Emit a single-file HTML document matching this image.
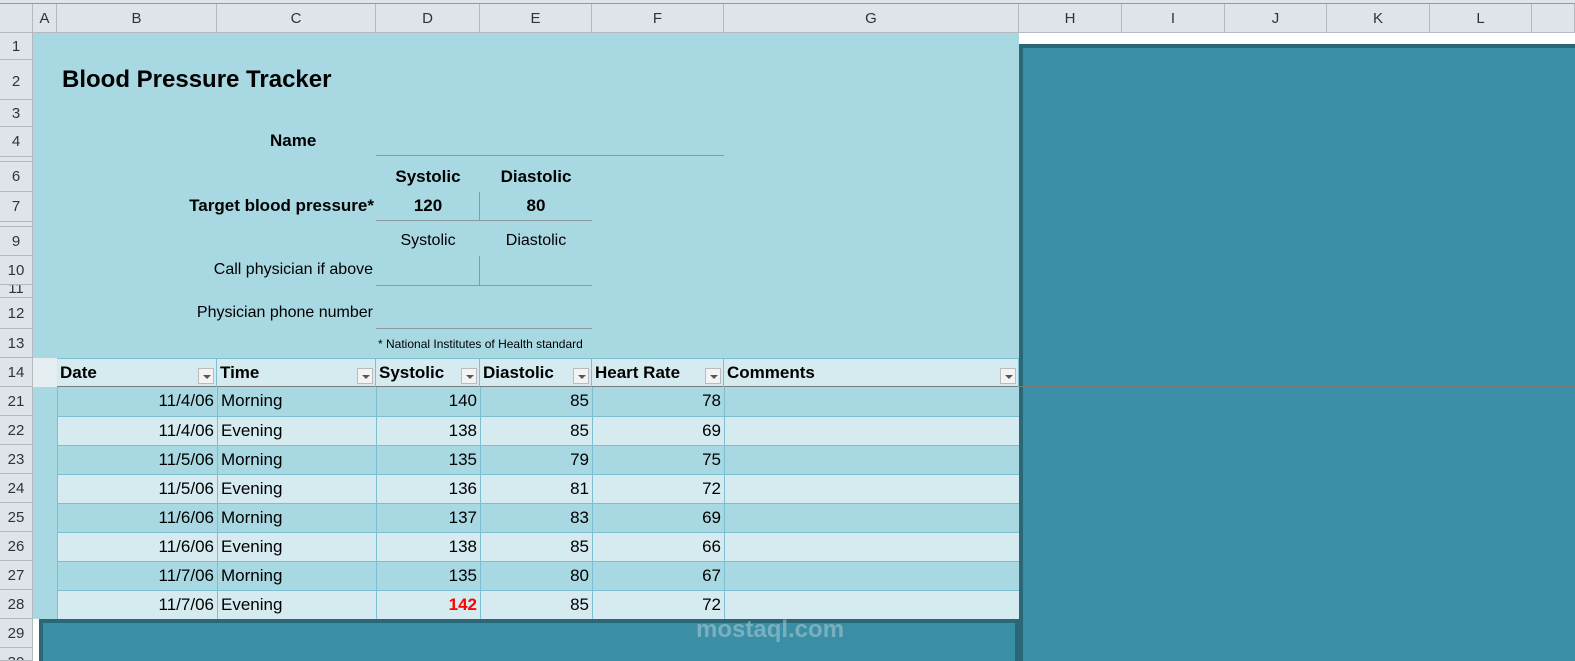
<!DOCTYPE html>
<html style="width:1575px;height:661px;overflow:hidden"><head><meta charset="utf-8"><style>
*{margin:0;padding:0;box-sizing:border-box}
body{width:1575px;height:661px;overflow:hidden;background:#fff;font-family:"Liberation Sans",sans-serif;position:relative}
div{position:absolute}
.ch{top:4px;height:29px;background:#dfe3ea;border-right:1px solid #b4b8bf;border-bottom:1px solid #b4b8bf;font-size:15px;color:#333;text-align:center;line-height:29px}
.rh{left:0;width:33px;background:#dfe3ea;border-bottom:1px solid #b4b8bf;border-right:1px solid #b4b8bf;font-size:15px;color:#333;text-align:center;overflow:hidden}
.t{font-size:17px;color:#000;white-space:nowrap}
.b{font-weight:bold}
.c{height:29px;line-height:29px;font-size:17px;border-right:1px solid #7cbfd0;padding:0 3px;white-space:nowrap}
.hd{font-weight:bold}
.dd{position:absolute;right:2px;top:10px;width:16px;height:16px;background:#f3f3f3;border:1px solid #bbb}
.dd:after{content:"";position:absolute;left:4px;top:6px;border-left:4px solid transparent;border-right:4px solid transparent;border-top:4px solid #555}
.ln{height:1px;background:#8c9a9e}
td{height:29px;padding:0 3px;border-right:1px solid #7cbfd0;border-bottom:1px solid #7cbfd0;text-align:right;white-space:nowrap;line-height:28px}
td:nth-child(2){text-align:left}
td:first-child{border-left:1px solid #7cbfd0}
</style></head><body>
<div style="left:0;top:0;width:1575px;height:4px;background:#dfe3ea;border-bottom:1px solid #999"></div>
<div class="ch" style="left:0;width:33px"></div>
<div class="ch" style="left:33px;width:24px">A</div>
<div class="ch" style="left:57px;width:160px">B</div>
<div class="ch" style="left:217px;width:159px">C</div>
<div class="ch" style="left:376px;width:104px">D</div>
<div class="ch" style="left:480px;width:112px">E</div>
<div class="ch" style="left:592px;width:132px">F</div>
<div class="ch" style="left:724px;width:295px">G</div>
<div class="ch" style="left:1019px;width:103px">H</div>
<div class="ch" style="left:1122px;width:103px">I</div>
<div class="ch" style="left:1225px;width:102px">J</div>
<div class="ch" style="left:1327px;width:103px">K</div>
<div class="ch" style="left:1430px;width:102px">L</div>
<div class="ch" style="left:1532px;width:43px"></div>

<div class="rh" style="top:33px;height:27px;line-height:27px">1</div>
<div class="rh" style="top:60px;height:40px;line-height:44px">2</div>
<div class="rh" style="top:100px;height:27px;line-height:27px">3</div>
<div class="rh" style="top:127px;height:30px;line-height:30px">4</div>
<div class="rh" style="top:157px;height:5px"></div>
<div class="rh" style="top:162px;height:30px;line-height:30px">6</div>
<div class="rh" style="top:192px;height:30px;line-height:30px">7</div>
<div class="rh" style="top:222px;height:5px"></div>
<div class="rh" style="top:227px;height:29px;line-height:29px">9</div>
<div class="rh" style="top:256px;height:29px;line-height:29px">10</div>
<div class="rh" style="top:285px;height:13px;line-height:8px">11</div>
<div class="rh" style="top:298px;height:31px;line-height:31px">12</div>
<div class="rh" style="top:329px;height:29px;line-height:29px">13</div>
<div class="rh" style="top:358px;height:29px;line-height:29px">14</div>
<div class="rh" style="top:387px;height:29px;line-height:29px">21</div>
<div class="rh" style="top:416px;height:29px;line-height:29px">22</div>
<div class="rh" style="top:445px;height:29px;line-height:29px">23</div>
<div class="rh" style="top:474px;height:29px;line-height:29px">24</div>
<div class="rh" style="top:503px;height:29px;line-height:29px">25</div>
<div class="rh" style="top:532px;height:29px;line-height:29px">26</div>
<div class="rh" style="top:561px;height:29px;line-height:29px">27</div>
<div class="rh" style="top:590px;height:29px;line-height:29px">28</div>
<div class="rh" style="top:619px;height:29px;line-height:29px">29</div>
<div class="rh" style="top:648px;height:13px;line-height:29px">30</div>

<div style="left:33px;top:33px;width:986px;height:586px;background:#a8d8e2"></div>
<div style="left:33px;top:358px;width:24px;height:29px;background:#e4eef1"></div>

<div class="t b" style="left:62px;top:66px;font-size:24px">Blood Pressure Tracker</div>
<div class="t b" style="left:270px;top:131px">Name</div>
<div class="ln" style="left:376px;top:155px;width:348px"></div>
<div class="t b" style="left:376px;top:167px;width:104px;text-align:center">Systolic</div>
<div class="t b" style="left:480px;top:167px;width:112px;text-align:center">Diastolic</div>
<div class="t b" style="left:57px;top:196px;width:317px;text-align:right">Target blood pressure*</div>
<div class="t b" style="left:376px;top:196px;width:104px;text-align:center">120</div>
<div class="t b" style="left:480px;top:196px;width:112px;text-align:center">80</div>
<div style="left:479px;top:192px;width:1px;height:29px;background:#8c9a9e"></div>
<div class="ln" style="left:376px;top:220px;width:216px"></div>
<div class="t" style="left:376px;top:232px;width:104px;text-align:center;font-size:16px">Systolic</div>
<div class="t" style="left:480px;top:232px;width:112px;text-align:center;font-size:16px">Diastolic</div>
<div class="t" style="left:57px;top:261px;width:316px;text-align:right;font-size:16px">Call physician if above</div>
<div style="left:479px;top:256px;width:1px;height:29px;background:#8c9a9e"></div>
<div class="ln" style="left:376px;top:285px;width:216px"></div>
<div class="t" style="left:57px;top:304px;width:316px;text-align:right;font-size:16px">Physician phone number</div>
<div class="ln" style="left:376px;top:328px;width:216px"></div>
<div class="t" style="left:378px;top:337px;font-size:12px">* National Institutes of Health standard</div>

<div style="left:57px;top:358px;width:962px;height:29px;background:#d6ebf0;border-top:1px solid #7cbfd0;border-bottom:1px solid #7a7a7a"></div>
<div class="c hd" style="left:57px;top:358px;width:160px">Date<span class="dd"></span></div>
<div class="c hd" style="left:217px;top:358px;width:159px">Time<span class="dd"></span></div>
<div class="c hd" style="left:376px;top:358px;width:104px">Systolic<span class="dd"></span></div>
<div class="c hd" style="left:480px;top:358px;width:112px">Diastolic<span class="dd"></span></div>
<div class="c hd" style="left:592px;top:358px;width:132px">Heart Rate<span class="dd"></span></div>
<div class="c hd" style="left:724px;top:358px;width:295px">Comments<span class="dd"></span></div>

<div style="left:57px;top:387px;width:962px;height:232px;background:repeating-linear-gradient(#a8d8e2 0 29px,#d6ebf0 29px 58px)"></div>
<div style="left:57px;top:387px;width:962px;height:232px;overflow:hidden">
<table style="border-collapse:collapse;font-size:17px;font-family:'Liberation Sans',sans-serif;table-layout:fixed;width:962px">
<colgroup><col style="width:160px"><col style="width:159px"><col style="width:104px"><col style="width:112px"><col style="width:132px"><col style="width:295px"></colgroup>
<tbody>
<tr><td>11/4/06</td><td>Morning</td><td>140</td><td>85</td><td>78</td><td></td></tr>
<tr><td>11/4/06</td><td>Evening</td><td>138</td><td>85</td><td>69</td><td></td></tr>
<tr><td>11/5/06</td><td>Morning</td><td>135</td><td>79</td><td>75</td><td></td></tr>
<tr><td>11/5/06</td><td>Evening</td><td>136</td><td>81</td><td>72</td><td></td></tr>
<tr><td>11/6/06</td><td>Morning</td><td>137</td><td>83</td><td>69</td><td></td></tr>
<tr><td>11/6/06</td><td>Evening</td><td>138</td><td>85</td><td>66</td><td></td></tr>
<tr><td>11/7/06</td><td>Morning</td><td>135</td><td>80</td><td>67</td><td></td></tr>
<tr><td>11/7/06</td><td>Evening</td><td style="color:#f00;font-weight:bold">142</td><td>85</td><td>72</td><td></td></tr>
</tbody></table></div>

<div style="left:1019px;top:44px;width:556px;height:617px;background:#3a8fa6;border-left:4px solid #2a6878;border-top:4px solid #2a6878"></div>
<div style="left:1019px;top:386px;width:556px;height:1px;background:#7a7a7a"></div>
<div style="left:39px;top:619px;width:980px;height:42px;background:#3a8fa6;border-left:4px solid #2a6878;border-top:4px solid #2a6878;border-right:4px solid #2a6878"></div>
<div style="left:696px;top:616px;font-size:24px;font-weight:bold;color:rgba(200,215,220,0.45)">mostaql.com</div>
</body></html>
